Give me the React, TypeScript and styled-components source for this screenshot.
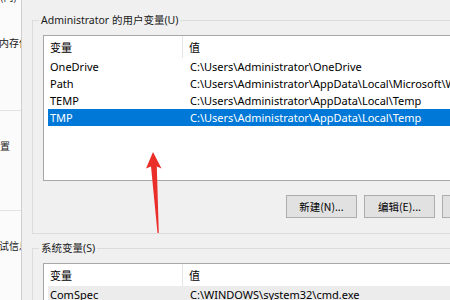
import styled, { createGlobalStyle } from 'styled-components';

const GlobalStyle = createGlobalStyle`
  html, body {
    margin: 0;
    padding: 0;
    background: #f0f0f0;
    overflow: hidden;
  }
  body {
    font-family: 'Noto Sans', 'Noto Sans CJK SC', sans-serif;
    font-size: 11px;
    color: #000;
  }
`;

type Row = { name: string; value: string; state?: 'selected' | 'hover' };

const userVars: Row[] = [
  { name: 'OneDrive', value: 'C:\\Users\\Administrator\\OneDrive' },
  {
    name: 'Path',
    value: 'C:\\Users\\Administrator\\AppData\\Local\\Microsoft\\WindowsApps;'
  },
  { name: 'TEMP', value: 'C:\\Users\\Administrator\\AppData\\Local\\Temp' },
  {
    name: 'TMP',
    value: 'C:\\Users\\Administrator\\AppData\\Local\\Temp',
    state: 'selected'
  }
];

const systemVars: Row[] = [
  { name: 'ComSpec', value: 'C:\\WINDOWS\\system32\\cmd.exe', state: 'hover' }
];

const App = () => {
  return (
    <>
      <GlobalStyle />
      <Page>
        <SidePanel>
          <SideTop>(内)</SideTop>
          <SideSection height={102} pad={26}>
            <SideText indent={-1}>内存使用</SideText>
          </SideSection>
          <SideSection height={100} pad={27}>
            <SideText indent={-10}>设置</SideText>
          </SideSection>
          <SideSection height={100} pad={27} last>
            <SideText indent={-11}>调试信息</SideText>
          </SideSection>
        </SidePanel>
        <Main>
          <GroupBox>
            <GroupTitle>Administrator 的用户变量(U)</GroupTitle>
            <VarList rows={userVars} height={146} />
            <ButtonRow>
              <DialogButton>新建(N)...</DialogButton>
              <DialogButton>编辑(E)...</DialogButton>
              <DialogButton>删除(D)</DialogButton>
            </ButtonRow>
          </GroupBox>
          <GroupBox spaced>
            <GroupTitle>系统变量(S)</GroupTitle>
            <VarList rows={systemVars} height={80} />
          </GroupBox>
        </Main>
        <Arrow viewBox="0 0 450 300" width="450" height="300">
          <polygon
            points="153,152 146,168.5 151,166.5 157.5,233 158.8,233 156.8,166.5 161.5,168.5"
            fill="#ea2f2b"
          />
        </Arrow>
      </Page>
    </>
  );
};

export default App;

const VarList = ({ rows, height }: { rows: Row[]; height: number }) => (
  <ListView style={{ height }}>
    <HeaderRow>
      <HeaderCell divider>变量</HeaderCell>
      <HeaderCell>值</HeaderCell>
    </HeaderRow>
    {rows.map((row) => (
      <ListRow key={row.name} state={row.state}>
        <NameCell>{row.name}</NameCell>
        <ValueCell>{row.value}</ValueCell>
      </ListRow>
    ))}
  </ListView>
);

const Page = styled.div`
  position: relative;
  display: flex;
  width: 450px;
  height: 300px;
  overflow: hidden;
`;

const SidePanel = styled.div`
  width: 21px;
  flex-shrink: 0;
  background: #fbfbfb;
  border-right: 1px solid #cfcfcf;
  overflow: hidden;
  display: flex;
  flex-direction: column;
  font-family: 'Noto Sans CJK SC', sans-serif;
  font-size: 10px;
  color: #1a1a1a;
`;

const SideTop = styled.div`
  flex-shrink: 0;
  margin-top: -11px;
  height: 20px;
  line-height: 16px;
  white-space: nowrap;
`;

const SideSection = styled.div<{ height: number; pad: number; last?: boolean }>`
  flex-shrink: 0;
  height: ${({ height }) => height}px;
  box-sizing: border-box;
  padding-top: ${({ pad }) => pad}px;
  border-bottom: ${({ last }) => (last ? 'none' : '1px solid #e3e3e3')};
`;

const SideText = styled.div<{ indent: number }>`
  white-space: nowrap;
  line-height: 16px;
  margin-left: ${({ indent }) => indent}px;
`;

const Main = styled.div`
  flex: 1;
  padding: 20px 0 0 10px;
  display: flex;
  flex-direction: column;
  min-width: 0;
`;

const GroupBox = styled.div<{ spaced?: boolean }>`
  width: 492px;
  flex-shrink: 0;
  border: 1px solid #dcdcdc;
  margin-top: ${({ spaced }) => (spaced ? '14px' : '0')};
  padding: 0 0 15px 10px;
  display: flex;
  flex-direction: column;
`;

const GroupTitle = styled.div`
  align-self: flex-start;
  margin: -9px 0 0 -4px;
  padding: 0 2px;
  background: #f0f0f0;
  line-height: 16px;
  font-size: 10.5px;
  color: #1a1a1a;
  white-space: nowrap;
`;

const ListView = styled.div`
  flex-shrink: 0;
  margin-top: 7px;
  background: #fff;
  border: 1px solid #a8a8a8;
  box-sizing: border-box;
  padding: 0 0 0 4px;
  overflow: hidden;
`;

const HeaderRow = styled.div`
  display: grid;
  grid-template-columns: 135px 1fr;
  height: 22px;
`;

const HeaderCell = styled.div<{ divider?: boolean }>`
  line-height: 22px;
  padding-left: ${({ divider }) => (divider ? '2px' : '6px')};
  border-right: ${({ divider }) => (divider ? '1px solid #e5e5e5' : 'none')};
  font-family: 'Noto Sans CJK SC', sans-serif;
`;

const ListRow = styled.div<{ state?: 'selected' | 'hover' }>`
  display: grid;
  grid-template-columns: 135px 1fr;
  height: 17px;
  line-height: 18px;
  white-space: nowrap;
  background: ${({ state }) =>
    state === 'selected' ? '#0078d7' : state === 'hover' ? '#ececec' : 'transparent'};
  color: ${({ state }) => (state === 'selected' ? '#fff' : '#000')};
`;

const NameCell = styled.div`
  padding-left: 2px;
`;

const ValueCell = styled.div`
  padding-left: 7px;
`;

const ButtonRow = styled.div`
  display: flex;
  justify-content: flex-start;
  gap: 7px;
  margin-top: 14px;
  padding-left: 243px;
`;

const DialogButton = styled.button`
  flex-shrink: 0;
  width: 71px;
  height: 23px;
  padding: 0;
  background: #e1e1e1;
  border: 1px solid #adadad;
  font-family: 'Noto Sans CJK SC', sans-serif;
  font-size: 10.5px;
  color: #000;
`;

const Arrow = styled.svg`
  position: absolute;
  left: 0;
  top: 0;
  pointer-events: none;
`;
